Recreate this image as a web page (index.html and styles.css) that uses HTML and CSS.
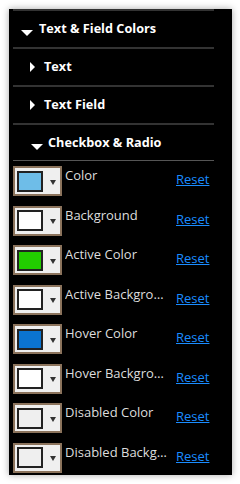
FILE: index.html
```html
<!DOCTYPE html>
<html>
<head>
<meta charset="utf-8">
<link rel="stylesheet" href="styles.css">
</head>
<body>
<div class="panel">
  <div class="sec sec-top">
    <span class="tri-down"></span><span class="title">Text &amp; Field Colors</span>
  </div>
  <div class="sec sub">
    <span class="tri-right"></span><span class="title">Text</span>
  </div>
  <div class="sec sub">
    <span class="tri-right"></span><span class="title">Text Field</span>
  </div>
  <div class="sec sub open">
    <span class="tri-down"></span><span class="title">Checkbox &amp; Radio</span>
  </div>
  <div class="rows">
    <div class="row"><div class="swatch"><span class="chip" style="background:#6ebde8"></span><span class="arrow"></span></div><span class="label">Color</span><a class="reset" href="#">Reset</a></div>
    <div class="row"><div class="swatch"><span class="chip" style="background:#ffffff"></span><span class="arrow"></span></div><span class="label">Background</span><a class="reset" href="#">Reset</a></div>
    <div class="row"><div class="swatch"><span class="chip" style="background:#22cc00"></span><span class="arrow"></span></div><span class="label">Active Color</span><a class="reset" href="#">Reset</a></div>
    <div class="row"><div class="swatch"><span class="chip" style="background:#ffffff"></span><span class="arrow"></span></div><span class="label">Active Background</span><a class="reset" href="#">Reset</a></div>
    <div class="row"><div class="swatch"><span class="chip" style="background:#0b74d0"></span><span class="arrow"></span></div><span class="label">Hover Color</span><a class="reset" href="#">Reset</a></div>
    <div class="row"><div class="swatch"><span class="chip" style="background:#ffffff"></span><span class="arrow"></span></div><span class="label">Hover Background</span><a class="reset" href="#">Reset</a></div>
    <div class="row"><div class="swatch"><span class="chip" style="background:#efefef"></span><span class="arrow"></span></div><span class="label">Disabled Color</span><a class="reset" href="#">Reset</a></div>
    <div class="row"><div class="swatch"><span class="chip" style="background:#efefef"></span><span class="arrow"></span></div><span class="label">Disabled Background</span><a class="reset" href="#">Reset</a></div>
  </div>
</div>
</body>
</html>
```
FILE: styles.css
```css
html, body {
  margin: 0;
  padding: 0;
  background: #ffffff;
}
body {
  font-family: "Open Sans", "Liberation Sans", sans-serif;
}
.panel {
  margin: 9px;
  width: 223px;
  height: 466px;
  box-sizing: border-box;
  background: #000;
  box-shadow: 0 0 7px rgba(0,0,0,0.35);
  padding: 0 18px 0 4px;
  overflow: hidden;
}
.sec {
  height: 36px;
  border-top: 2px solid #333;
  display: flex;
  align-items: center;
  color: #fff;
  font-weight: bold;
  font-size: 12.7px;
}
.sec-top {
  padding-left: 8px;
}
.sub {
  padding-left: 18px;
}
.sec.open {
  height: 35px;
  border-bottom: 1px solid #555;
}
.title {
  line-height: 18px;
  margin-top: -2px;
}
.tri-down {
  width: 0;
  height: 0;
  border-left: 6px solid transparent;
  border-right: 6px solid transparent;
  border-top: 6px solid #fff;
  margin-top: 8px;
  margin-right: 5px;
}
.sec-top .tri-down {
  margin-right: 6px;
}
.tri-right {
  width: 0;
  height: 0;
  border-top: 5.5px solid transparent;
  border-bottom: 5.5px solid transparent;
  border-left: 5px solid #fff;
  margin-left: -1px;
  margin-right: 9px;
}
.rows {
  display: flex;
  flex-direction: column;
}
.row {
  height: 39.57px;
  display: flex;
  align-items: flex-start;
  padding-top: 5px;
  box-sizing: border-box;
}
.swatch {
  width: 49px;
  height: 30px;
  box-sizing: border-box;
  border: 2px solid #8b735c;
  background: #efefef;
  display: flex;
  align-items: center;
  padding-left: 2px;
  flex: none;
}
.chip {
  width: 26px;
  height: 21px;
  box-sizing: border-box;
  border: 2px solid #222;
  display: block;
}
.arrow {
  width: 0;
  height: 0;
  border-left: 3px solid transparent;
  border-right: 3px solid transparent;
  border-top: 5px solid #333;
  margin-left: 7px;
  margin-top: 2px;
}
.label {
  color: #dddddd;
  font-size: 13px;
  line-height: 18px;
  margin-left: 3px;
  width: 106px;
  white-space: nowrap;
  overflow: hidden;
  text-overflow: ellipsis;
  flex: none;
}
.reset {
  color: #1a8cff;
  font-size: 13px;
  line-height: 18px;
  margin-top: 4px;
  margin-left: 5px;
  text-decoration: underline;
}
```
